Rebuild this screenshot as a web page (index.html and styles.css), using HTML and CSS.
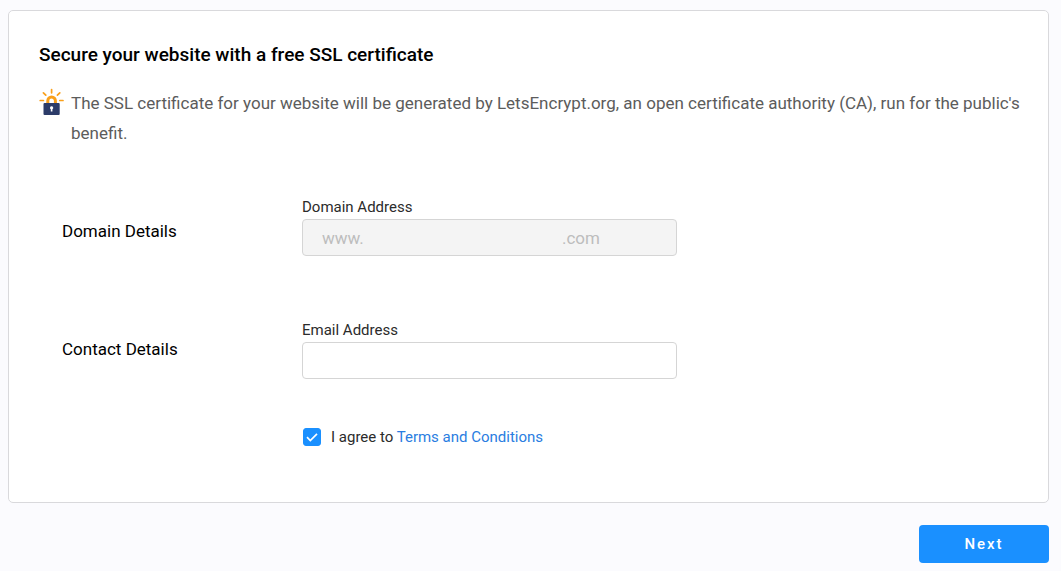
FILE: index.html
```
<!DOCTYPE html>
<html lang="en">
<head>
  <meta charset="UTF-8" />
  <meta name="viewport" content="width=device-width, initial-scale=1" />
  <title>Free SSL certificate</title>
  <link rel="stylesheet" href="styles.css">
</head>
<body>
  <form id="sslForm">
    <div class="card">
      <h1 class="title">Secure your website with a free SSL certificate</h1>
      <div class="intro">
        <svg class="logo" viewBox="0 0 26 28" aria-hidden="true">
          <g stroke="#f9a01b" stroke-width="1.7" stroke-linecap="round">
            <path d="M12.6 1.6v3.2M4.4 4.8l2.4 2.4M20.8 4.8l-2.4 2.4M1.2 12.5h3.2M20.8 12.5h3.2" />
          </g>
          <path d="M8.8 15v-2.2a3.8 3.8 0 0 1 7.6 0V15" fill="none" stroke="#f9a01b" stroke-width="3" />
          <rect x="4.5" y="15" width="16.2" height="12" rx="1" fill="#2c3c69" />
          <path d="M12.6 18.3a1.6 1.6 0 0 0-.8 3V23.4h1.6V21.3a1.6 1.6 0 0 0-.8-3z" fill="#fff" />
        </svg>
        <p>The SSL certificate for your website will be generated by LetsEncrypt.org, an open certificate authority (CA), run for the public's benefit.</p>
      </div>

      <div class="details">
        <div class="row domain">
          <h2>Domain Details</h2>
          <div class="field">
            <label for="domain">Domain Address</label>
            <input type="text" id="domain" value="www.                                               .com" disabled />
          </div>
        </div>
        <div class="row">
          <h2>Contact Details</h2>
          <div class="field">
            <label for="email">Email Address</label>
            <input type="email" id="email" />
          </div>
        </div>
        <div class="agree">
          <span class="check">
            <input type="checkbox" id="terms" checked />
            <svg viewBox="0 0 18 18" aria-hidden="true"><path d="M4 9.2l3.3 3.3L14 5.8" /></svg>
          </span>
          <label for="terms">I agree to <a href="#terms">Terms and Conditions</a></label>
        </div>
      </div>
    </div>
    <div class="actions">
      <button type="submit">Next</button>
    </div>
  </form>
</body>
</html>
```

FILE: styles.css
```
* { box-sizing: border-box; }
body { margin: 10px 12px 8px 8px; font-family: Roboto, sans-serif; background: #fbfbfe; color: #000; }
.card { background: #fff; border: 1px solid #d9d9dc; border-radius: 5px; padding: 32px 20px 53px 30px; }
.title { margin: 0; font-size: 19px; line-height: 24px; font-weight: 500; }
.intro { display: flex; gap: 6px; margin-top: 21px; color: #5c5c5c; font-size: 17px; line-height: 30px; }
.intro p { margin: 0; }
.logo { flex: none; width: 26px; height: 28px; }
.details { padding-left: 23px; margin-top: 47px; }
.row { display: grid; grid-template-columns: 240px minmax(0, 375px); align-items: center; }
.row.domain { min-height: 72px; margin-bottom: 51px; }
.row.domain .field { align-self: start; }
.row h2 { margin: 0; font-size: 17px; line-height: 24px; font-weight: 400; }
.field label { display: block; font-size: 15px; line-height: 24px; color: #2b2b2b; }
.field input { display: block; width: 100%; height: 37px; padding: 0 19px; border: 1px solid #d5d5d5; border-radius: 4px; background: #fff; font: 17px Roboto, sans-serif; color: #333; }
.field input:disabled { background: #f4f4f4; color: #bdbdbd; }
.agree { display: flex; align-items: center; gap: 10px; margin: 46px 0 0 241px; font-size: 15px; line-height: 24px; color: #2b2b2b; }
.agree a { color: #2a7de1; text-decoration: none; }
.check { position: relative; width: 18px; height: 18px; }
.check input { appearance: none; display: block; width: 18px; height: 18px; margin: 0; border: 1px solid #1a90ff; border-radius: 3px; background: #fff; }
.check input:checked { background: #1a90ff; }
.check svg { position: absolute; inset: 0; pointer-events: none; fill: none; stroke: #fff; stroke-width: 1.7; }
.check input:not(:checked) + svg { display: none; }
.actions { display: flex; justify-content: flex-end; margin-top: 22px; }
.actions button { width: 130px; height: 38px; border: 0; border-radius: 4px; background: #1a90ff; color: #fff; font: 500 15px Roboto, sans-serif; letter-spacing: 2px; cursor: pointer; }
```
